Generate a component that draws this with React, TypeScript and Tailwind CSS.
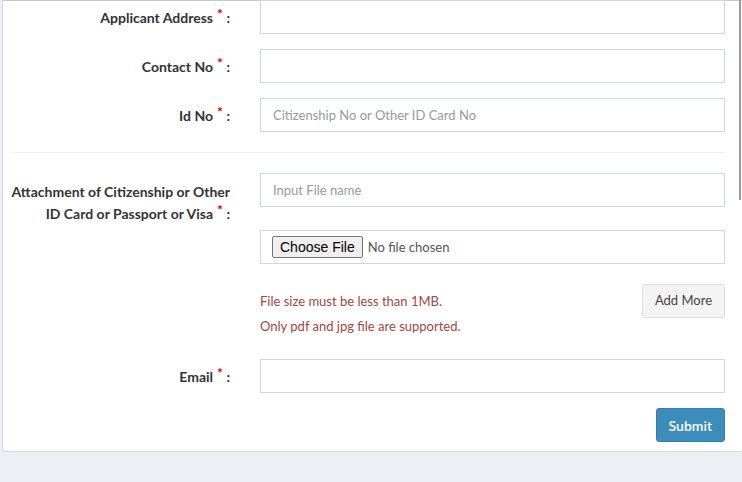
import React from "react";

function Req() {
	return <span className="relative -top-[4px] ml-[4px] text-[14px] text-[#dd0000]">*</span>;
}

function FieldLabel({text, className = ""}: {text: React.ReactNode; className?: string}) {
	return (
		<label className={`w-[227px] shrink-0 pt-[8px] text-right text-[14px] font-bold leading-[20px] text-[#333] ${className}`}>
			{text}
			<Req/> :
		</label>
	);
}

function TextInput({placeholder}: {placeholder?: string}) {
	return (
		<input
			type="text"
			placeholder={placeholder}
			className="h-[34px] w-full border border-[#d2d6de] bg-white px-[12px] text-[13px] text-[#555] outline-none placeholder:text-[#999]"
		/>
	);
}

function Row({label, children, className = ""}: {label: React.ReactNode; children: React.ReactNode; className?: string}) {
	return (
		<div className={`flex ${className}`}>
			{label}
			<div className="ml-[30px] flex-1">{children}</div>
		</div>
	);
}

export default function App() {
	return (
		<div className="relative h-[482px] overflow-hidden bg-[#ecf0f5] font-['Lato','Liberation_Sans',sans-serif]">
			<div className="ml-[2px] h-[452px] rounded-b-[3px] border-t border-l border-b border-[#d2d6de] border-t-[#c8c8c8] bg-white pr-[17px]">
				<Row label={<FieldLabel text="Applicant Address"/>} className="-mt-px">
					<TextInput/>
				</Row>
				<Row label={<FieldLabel text="Contact No"/>} className="mt-[15px]">
					<TextInput/>
				</Row>
				<Row label={<FieldLabel text="Id No"/>} className="mt-[15px]">
					<TextInput placeholder="Citizenship No or Other ID Card No"/>
				</Row>

				<div className="ml-[10px] mt-[20px] border-t border-[#f0f0f0]"/>

				<Row
					className="mt-[20px]"
					label={
						<FieldLabel
							className="pt-[6px] leading-[22px]"
							text={<>Attachment of Citizenship or Other<br/>ID Card or Passport or Visa</>}
						/>
					}>
					<TextInput placeholder="Input File name"/>
					<div className="mt-[23px] flex h-[34px] items-center border border-[#d2d6de] px-[11px]">
						<input
							type="file"
							className="w-full text-[13px] text-[#555] file:mr-[5px] file:h-[22px] file:rounded-[2px] file:border file:border-[#767676] file:bg-[#efefef] file:px-[7px] file:font-['Liberation_Sans',sans-serif] file:text-[14px] file:text-black"
						/>
					</div>
					<div className="mt-[20px] flex items-start justify-between">
						<div className="pt-[7px] text-[13px] leading-[20px] text-[#a0463f]">
							<p>File size must be less than 1MB.</p>
							<p className="mt-[5px]">Only pdf and jpg file are supported.</p>
						</div>
						<button className="h-[34px] rounded-[3px] border border-[#dddddd] bg-[#f4f4f4] px-[12px] text-[13px] text-[#444]">
							Add More
						</button>
					</div>
				</Row>

				<Row label={<FieldLabel text="Email"/>} className="mt-[23px]">
					<TextInput/>
					<div className="mt-[15px] flex justify-end">
						<button className="h-[34px] rounded-[3px] border border-[#367fa9] bg-[#3c8dbc] px-[12px] text-[14px] font-semibold text-white">
							Submit
						</button>
					</div>
				</Row>
			</div>
			<div className="absolute right-[1px] top-0 h-[200px] w-[2px] bg-[#9a9a9a]"/>
		</div>
	);
}
